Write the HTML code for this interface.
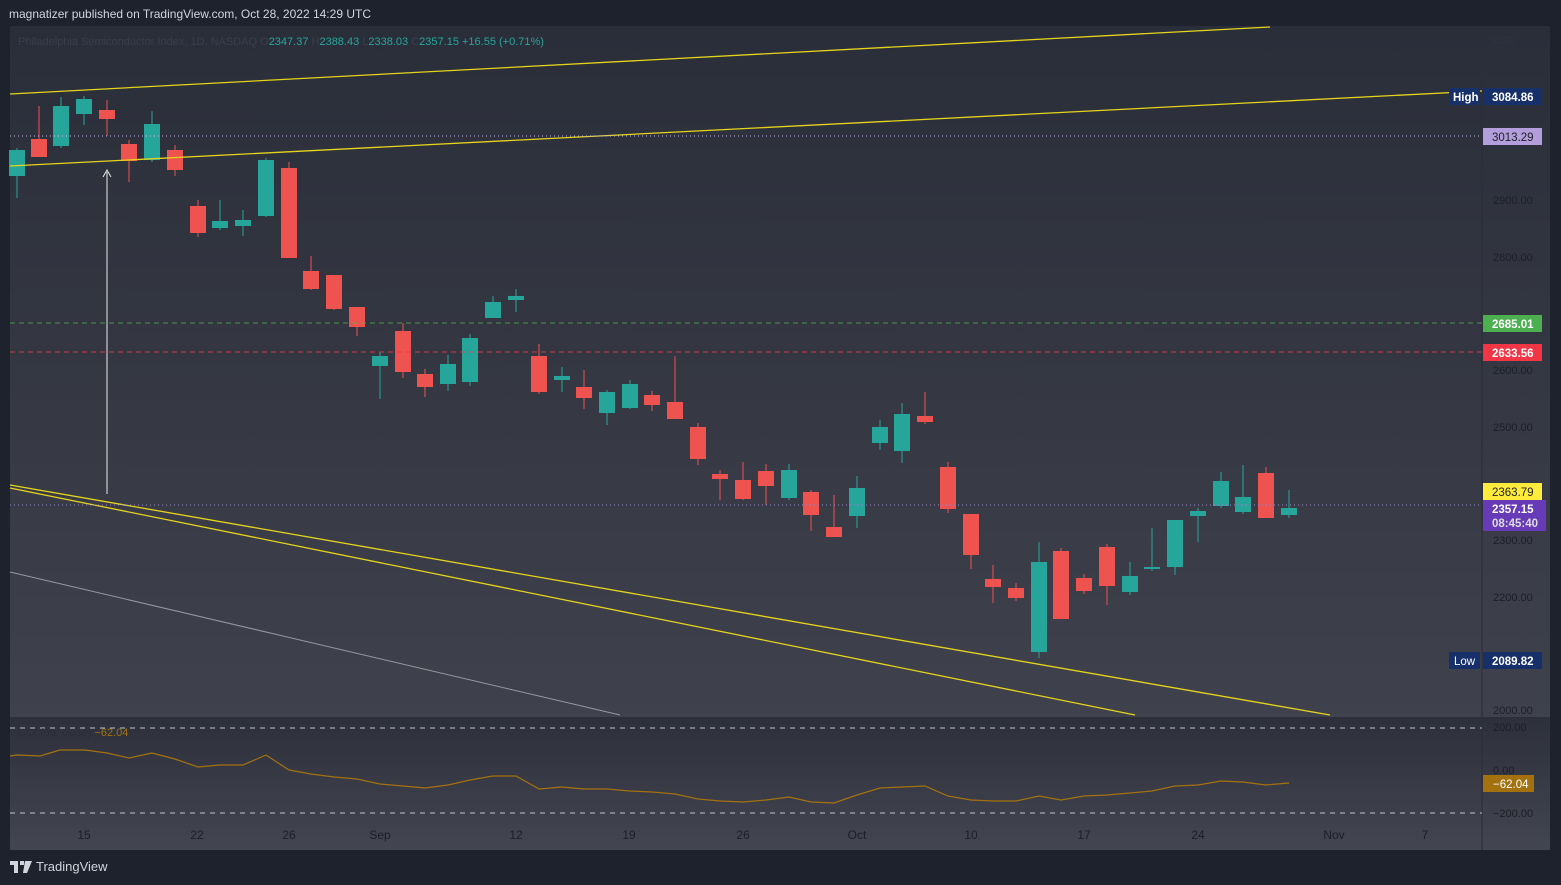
<!DOCTYPE html>
<html><head><meta charset="utf-8"><style>
html,body{margin:0;padding:0;background:#1e222d;width:1561px;height:885px;overflow:hidden;font-family:"Liberation Sans",sans-serif}
#hdr{position:absolute;left:9px;top:7px;color:#d1d4dc;font-size:12px}
svg{position:absolute;left:0;top:0}
#tv{position:absolute;left:10px;top:859px;color:#d1d4dc;font-size:13px;display:flex;align-items:center;gap:4px}
</style></head><body>
<div id="hdr">magnatizer published on TradingView.com, Oct 28, 2022 14:29 UTC</div>
<svg id="s" width="1561" height="885" xmlns="http://www.w3.org/2000/svg">
<defs>
<linearGradient id="g1" x1="0" y1="0" x2="0" y2="1"><stop offset="0" stop-color="#2a2e39"/><stop offset="1" stop-color="#3f414c"/></linearGradient>
<linearGradient id="g2" x1="0" y1="0" x2="0" y2="1"><stop offset="0" stop-color="#2d303b"/><stop offset="1" stop-color="#434550"/></linearGradient>
</defs>
<rect x="10" y="26" width="1540" height="691" fill="url(#g1)"/>
<rect x="10" y="717" width="1540" height="133" fill="url(#g2)"/>
<line x1="1482" y1="26" x2="1482" y2="850" stroke="#2a2d38" stroke-width="1"/>
<g id="c"></g>
<line x1="10" y1="94" x2="1270" y2="27" stroke="#e5d41c" stroke-width="1.3"/>
<line x1="10" y1="166" x2="1482" y2="91" stroke="#e5d41c" stroke-width="1.3"/>
<line x1="10" y1="485" x2="1330" y2="715" stroke="#e5d41c" stroke-width="1.3"/>
<line x1="10" y1="488" x2="1135" y2="715" stroke="#e5d41c" stroke-width="1.3"/>
<line x1="10" y1="572" x2="620" y2="715" stroke="#9598a1" stroke-width="1"/>
<line x1="107" y1="494" x2="107" y2="172" stroke="#e8e8e8" stroke-width="1"/>
<path d="M103 177 L107 170 L111 177" fill="none" stroke="#e8e8e8" stroke-width="1"/>
<line x1="10" y1="136" x2="1482" y2="136" stroke="#c8b8e8" stroke-dasharray="1 3"/>
<line x1="10" y1="323" x2="1482" y2="323" stroke="#4caf50" stroke-dasharray="5 4" opacity=".8"/>
<line x1="10" y1="352" x2="1482" y2="352" stroke="#f23645" stroke-dasharray="5 4" opacity=".8"/>
<line x1="10" y1="505" x2="1482" y2="505" stroke="#9a8ac8" stroke-dasharray="1 3"/>
<line x1="10" y1="728" x2="1482" y2="728" stroke="#c0c3cc" stroke-dasharray="5 5"/>
<line x1="10" y1="813" x2="1482" y2="813" stroke="#c0c3cc" stroke-dasharray="5 5"/>
<polyline id="cci" fill="none" stroke="#a3720f" stroke-width="1.2"/>
<g font-size="11" fill="#1c1f28">
<text x="1493" y="44" fill="#2f3240">USD</text>
<text x="1493" y="204">2900.00</text><text x="1493" y="261">2800.00</text>
<text x="1493" y="374">2600.00</text><text x="1493" y="431">2500.00</text>
<text x="1493" y="544">2300.00</text><text x="1493" y="601">2200.00</text>
<text x="1493" y="714">2000.00</text><text x="1493" y="731">200.00</text>
<text x="1493" y="774">0.00</text><text x="1493" y="817">−200.00</text>
</g>
<g font-size="12" fill="#1c1f28" text-anchor="middle">
<text x="84" y="839">15</text><text x="197" y="839">22</text><text x="289" y="839">26</text><text x="380" y="839">Sep</text><text x="516" y="839">12</text><text x="629" y="839">19</text><text x="743" y="839">26</text><text x="857" y="839">Oct</text><text x="971" y="839">10</text><text x="1084" y="839">17</text><text x="1198" y="839">24</text><text x="1334" y="839">Nov</text><text x="1425" y="839">7</text>
</g>
<text x="18" y="45" font-size="11" fill="#3a3e4a">Philadelphia Semiconductor Index, 1D, NASDAQ  O<tspan fill="#26a69a">2347.37</tspan>  H<tspan fill="#26a69a">2388.43</tspan>  L<tspan fill="#26a69a">2338.03</tspan>  C<tspan fill="#26a69a">2357.15  +16.55 (+0.71%)</tspan></text>
<text x="18" y="736" font-size="11" fill="#2b2e39">CCI (55, close)  <tspan fill="#a3720f">−62.04</tspan></text>
<g font-size="11.5" font-weight="bold">
<rect x="1449" y="88" width="31" height="17" fill="#17306a"/><text x="1453" y="101" fill="#fff">High</text>
<rect x="1483" y="88" width="59" height="17" fill="#17306a"/><text x="1492" y="101" fill="#fff">3084.86</text>
<rect x="1483" y="128" width="59" height="17" fill="#b39ddb"/><text x="1492" y="141" fill="#1c1f28" font-weight="normal">3013.29</text>
<rect x="1483" y="315" width="59" height="17" fill="#4caf50"/><text x="1492" y="328" fill="#fff">2685.01</text>
<rect x="1483" y="344" width="59" height="17" fill="#f23645"/><text x="1492" y="357" fill="#fff">2633.56</text>
<rect x="1483" y="483" width="59" height="17" fill="#ffeb3b"/><text x="1492" y="496" fill="#1c1f28" font-weight="normal">2363.79</text>
<rect x="1483" y="500" width="63" height="31" fill="#673ab7"/><text x="1492" y="513" fill="#fff">2357.15</text><text x="1492" y="527" fill="#ddd">08:45:40</text>
<rect x="1449" y="652" width="31" height="17" fill="#17306a"/><text x="1454" y="665" fill="#fff" font-weight="normal">Low</text>
<rect x="1483" y="652" width="59" height="17" fill="#17306a"/><text x="1492" y="665" fill="#fff">2089.82</text>
<rect x="1483" y="775" width="51" height="17" fill="#a3720f"/><text x="1493" y="788" fill="#fff" font-weight="normal">−62.04</text>
</g>
</svg>
<div id="tv"><svg width="22" height="12" viewBox="0 0 22 12" style="position:static"><path d="M0 0h8v12H4V4H0z M10 0h4v4h-4z M15 0h7l-5 12h-4z" fill="#d1d4dc"/></svg><span>TradingView</span></div>
<script>
var d=[[17,'g',150,176,148,198],[39,'r',139,157,106,157],[61,'g',106,146,97,148],[84,'g',99,114,96,125],[107,'r',110,119,100,136],[129,'r',144,161,140,182],[152,'g',124,160,111,162],[175,'r',150,170,145,176],[198,'r',206,233,200,237],[220,'g',221,228,200,230],[243,'g',220,226,210,236],[266,'g',160,216,158,217],[289,'r',168,258,162,258],[311,'r',271,289,256,290],[334,'r',275,309,275,310],[357,'r',307,327,307,336],[380,'g',356,366,352,399],[403,'r',331,372,323,378],[425,'r',374,387,369,397],[448,'g',364,384,355,391],[470,'g',338,382,334,386],[493,'g',302,318,296,318],[516,'g',296,300,289,312],[539,'r',356,392,344,394],[562,'g',376,380,367,392],[584,'r',387,398,370,409],[607,'g',392,413,390,425],[630,'g',384,408,380,409],[652,'r',395,405,391,411],[675,'r',402,419,356,419],[698,'r',427,459,423,465],[720,'r',474,479,470,500],[743,'r',480,499,462,500],[766,'r',471,486,464,505],[789,'g',470,498,464,500],[811,'r',492,515,490,531],[834,'r',527,537,495,537],[857,'g',488,516,476,528],[880,'g',427,443,420,450],[902,'g',414,451,403,463],[925,'r',416,422,392,424],[948,'r',467,509,462,513],[971,'r',514,555,514,569],[993,'r',579,587,565,603],[1016,'r',588,598,583,601],[1039,'g',562,652,542,658],[1061,'r',551,619,548,619],[1084,'r',578,591,574,594],[1107,'r',547,586,544,605],[1130,'g',576,592,562,595],[1152,'g',567,569,528,571],[1175,'g',520,567,520,575],[1198,'g',511,516,508,542],[1221,'g',481,506,472,508],[1243,'g',497,512,465,514],[1266,'r',473,518,467,518],[1289,'g',508,515,490,518]];
var h='';d.forEach(function(c){var col=c[1]=='g'?'#26a69a':'#ef5350';h+='<line x1="'+c[0]+'" y1="'+c[4]+'" x2="'+c[0]+'" y2="'+c[5]+'" stroke="'+col+'"/><rect x="'+(c[0]-8)+'" y="'+c[2]+'" width="16" height="'+Math.max(2,c[3]-c[2])+'" fill="'+col+'"/>';});
document.getElementById('c').innerHTML=h;
var p=[[10,756],[17,755],[40,756],[60,750],[85,750],[107,753],[129,758],[152,753],[175,759],[198,767],[220,765],[243,765],[266,755],[289,770],[311,774],[334,777],[357,779],[380,784],[403,786],[425,788],[448,785],[470,780],[493,776],[516,776],[539,789],[562,787],[584,789],[607,789],[630,791],[652,792],[675,794],[698,799],[720,801],[743,802],[766,800],[789,797],[811,802],[834,803],[857,795],[880,788],[902,787],[925,786],[948,796],[971,800],[993,801],[1016,801],[1039,796],[1061,800],[1084,796],[1107,795],[1130,793],[1152,791],[1175,786],[1198,785],[1221,781],[1243,782],[1266,785],[1289,783]];
document.getElementById('cci').setAttribute('points',p.map(function(a){return a.join(',')}).join(' '));
</script>
</body></html>
